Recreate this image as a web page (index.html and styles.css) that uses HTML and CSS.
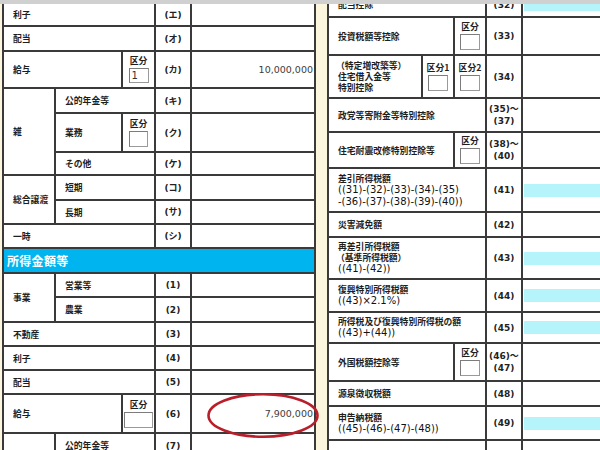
FILE: index.html
```html
<!DOCTYPE html>
<html lang="ja">
<head>
<meta charset="utf-8">
<title>申告書</title>
<link rel="stylesheet" href="styles.css">
</head>
<body>
<div class="page">
  <div class="band"></div>

  <div class="grid lgrid">
    <div class="cell lab c3">利子</div><div class="cell code">(エ)</div><div class="cell val"></div>
    <div class="cell lab c3">配当</div><div class="cell code">(オ)</div><div class="cell val"></div>
    <div class="cell lab c2">給与</div>
    <div class="cell kb"><span>区分</span><span class="box b1">1</span></div>
    <div class="cell code">(カ)</div><div class="cell val">10,000,000</div>

    <div class="cell lab r3">雑</div>
    <div class="cell lab c2">公的年金等</div><div class="cell code">(キ)</div><div class="cell val"></div>
    <div class="cell lab">業務</div>
    <div class="cell kb"><span>区分</span><span class="box b2"></span></div>
    <div class="cell code">(ク)</div><div class="cell val"></div>
    <div class="cell lab c2">その他</div><div class="cell code">(ケ)</div><div class="cell val"></div>

    <div class="cell lab r2">総合譲渡</div>
    <div class="cell lab c2">短期</div><div class="cell code">(コ)</div><div class="cell val"></div>
    <div class="cell lab c2">長期</div><div class="cell code">(サ)</div><div class="cell val"></div>

    <div class="cell lab c3">一時</div><div class="cell code">(シ)</div><div class="cell val"></div>

    <div class="cell hdr c5">所得金額等</div>

    <div class="cell lab r2">事業</div>
    <div class="cell lab c2">営業等</div><div class="cell code">(1)</div><div class="cell val"></div>
    <div class="cell lab c2">農業</div><div class="cell code">(2)</div><div class="cell val"></div>
    <div class="cell lab c3">不動産</div><div class="cell code">(3)</div><div class="cell val"></div>
    <div class="cell lab c3">利子</div><div class="cell code">(4)</div><div class="cell val"></div>
    <div class="cell lab c3">配当</div><div class="cell code">(5)</div><div class="cell val"></div>
    <div class="cell lab c2">給与</div>
    <div class="cell kb"><span>区分</span><span class="box b3"></span></div>
    <div class="cell code">(6)</div><div class="cell val">7,900,000</div>
    <div class="cell lab"></div>
    <div class="cell lab c2">公的年金等</div><div class="cell code">(7)</div><div class="cell val"></div>
  </div>

  <div class="grid rgrid">
    <div class="cell lab c3">配当控除</div><div class="cell code">(32)</div><div class="cell val"><span class="hl"></span></div>

    <div class="cell lab c2">投資税額等控除</div>
    <div class="cell kb"><span>区分</span><span class="box b4"></span></div>
    <div class="cell code">(33)</div><div class="cell val"></div>

    <div class="cell lab multi"><span class="fw">（特定増改築等）</span><span>住宅借入金等</span><span>特別控除</span></div>
    <div class="cell kb"><span>区分1</span><span class="box b4"></span></div>
    <div class="cell kb"><span>区分2</span><span class="box b4"></span></div>
    <div class="cell code">(34)</div><div class="cell val"></div>

    <div class="cell lab c3">政党等寄附金等特別控除</div><div class="cell code">(35)～<br>(37)</div><div class="cell val"></div>

    <div class="cell lab c2">住宅耐震改修特別控除等</div>
    <div class="cell kb"><span>区分</span><span class="box b4"></span></div>
    <div class="cell code">(38)～<br>(40)</div><div class="cell val"></div>

    <div class="cell lab c3 multi"><span>差引所得税額</span><span class="f">((31)-(32)-(33)-(34)-(35)</span><span class="f">-(36)-(37)-(38)-(39)-(40))</span></div>
    <div class="cell code">(41)</div><div class="cell val"><span class="hl"></span></div>

    <div class="cell lab c3">災害減免額</div><div class="cell code">(42)</div><div class="cell val"></div>

    <div class="cell lab c3 multi"><span>再差引所得税額</span><span class="fw">（基準所得税額）</span><span class="f">((41)-(42))</span></div>
    <div class="cell code">(43)</div><div class="cell val"><span class="hl"></span></div>

    <div class="cell lab c3 multi"><span>復興特別所得税額</span><span class="f">((43)×2.1%)</span></div>
    <div class="cell code">(44)</div><div class="cell val"><span class="hl"></span></div>

    <div class="cell lab c3 multi"><span>所得税及び復興特別所得税の額</span><span class="f">((43)+(44))</span></div>
    <div class="cell code">(45)</div><div class="cell val"><span class="hl"></span></div>

    <div class="cell lab c2">外国税額控除等</div>
    <div class="cell kb"><span>区分</span><span class="box b4"></span></div>
    <div class="cell code">(46)～<br>(47)</div><div class="cell val"></div>

    <div class="cell lab c3">源泉徴収税額</div><div class="cell code">(48)</div><div class="cell val"></div>

    <div class="cell lab c3 multi"><span>申告納税額</span><span class="f">((45)-(46)-(47)-(48))</span></div>
    <div class="cell code">(49)</div><div class="cell val"><span class="hl"></span></div>

    <div class="cell lab c3">予定納税額</div><div class="cell code">(50)</div><div class="cell val"></div>
  </div>

  <svg class="mark" width="116" height="48" viewBox="0 0 116 48">
    <ellipse cx="57" cy="23.5" rx="54.5" ry="21.3" fill="none" stroke="#b91f2b" stroke-width="2.6"/>
  </svg>
</div>
</body>
</html>
```

FILE: styles.css
```css
html, body {
  margin: 0;
  padding: 0;
  background: #fcf6df;
}

.page {
  position: relative;
  width: 600px;
  height: 450px;
  overflow: hidden;
  display: flex;
  align-items: flex-start;
  background: #fcf6df;
  font-family: "Noto Sans CJK JP", sans-serif;
  color: #1e1e1e;
}

.band {
  position: absolute;
  left: 0;
  top: 0;
  width: 600px;
  height: 4px;
  background: #d0d0d0;
  z-index: 3;
}

.grid {
  display: grid;
  gap: 2px;
  padding: 2px;
  background: #3a3a3a;
  flex: none;
}

.lgrid {
  margin: 2px 0 0 2px;
  grid-template-columns: 50px 65px 31px 34px 122px;
  grid-template-rows: 21px 23px 35px 23px 37px 21px 23px 22px 22px 23px 22px 23px 22px 22px 22px 37px 23px;
}

.rgrid {
  margin: -9px 0 0 11px;
  grid-template-columns: 92px 30px 30px 34px 120px;
  grid-template-rows: 23px 36px 41px 32px 34px 42px 23px 40px 31px 29px 36px 23px 32px 30px;
}

.c2 { grid-column: span 2; }
.c3 { grid-column: span 3; }
.c5 { grid-column: span 5; }
.r2 { grid-row: span 2; }
.r3 { grid-row: span 3; }

.cell {
  background: #fff;
  display: flex;
  align-items: center;
  font-size: 8.8px;
  font-weight: 700;
  line-height: 11px;
  overflow: hidden;
  min-width: 0;
}

.lab {
  padding-left: 9px;
}

.multi {
  flex-direction: column;
  align-items: flex-start;
  justify-content: center;
}

.fw {
  margin-left: -2px;
}

.f {
  font-family: "DejaVu Sans", sans-serif;
  font-weight: 400;
  font-size: 10px;
  line-height: 11.5px;
  color: #111;
  white-space: nowrap;
}

.code {
  justify-content: center;
  text-align: center;
  font-family: "DejaVu Sans", "Noto Sans CJK JP", sans-serif;
  font-size: 9px;
  line-height: 12px;
  color: #222;
}

.val {
  justify-content: flex-end;
  padding-right: 1px;
  font-family: "DejaVu Sans", sans-serif;
  font-weight: 400;
  font-size: 9.5px;
  color: #3c3c3c;
}

.rgrid .val {
  justify-content: flex-start;
  padding: 0 0 0 1px;
}

.hl {
  display: block;
  width: 100%;
  height: 13px;
  background: #b6f4fb;
}

.kb {
  flex-direction: column;
  justify-content: center;
  gap: 2px;
  line-height: 10px;
}

.box {
  display: block;
  box-sizing: border-box;
  width: 20px;
  height: 15px;
  border: 1px solid #9a9a9a;
  border-top-color: #7c7c7c;
  border-left-color: #7c7c7c;
  background: #fff;
  font-family: "DejaVu Sans", sans-serif;
  font-weight: 400;
  font-size: 10px;
  line-height: 13px;
  padding-left: 2px;
  color: #333;
}

.b1 { width: 20px; height: 15px; }
.b2 { width: 19px; height: 16px; }
.b3 { width: 29px; height: 16px; }
.b4 { width: 20px; height: 16px; }

.hdr {
  background: #00b4f0;
  color: #fff;
  font-size: 12px;
  padding-left: 3px;
  letter-spacing: 0.3px;
}

.mark {
  position: absolute;
  left: 206px;
  top: 392px;
  z-index: 2;
}
```
